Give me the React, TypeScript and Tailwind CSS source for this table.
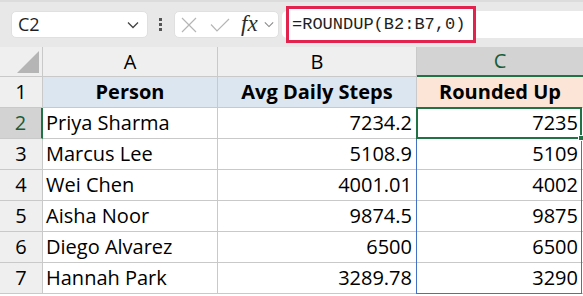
import React from "react"

const rows = [
  ["Priya Sharma", "7234.2", "7235"],
  ["Marcus Lee", "5108.9", "5109"],
  ["Wei Chen", "4001.01", "4002"],
  ["Aisha Noor", "9874.5", "9875"],
  ["Diego Alvarez", "6500", "6500"],
  ["Hannah Park", "3289.78", "3290"],
]

const line = "border-[#c9c9c9]"

function Chevron({ className }: { className?: string }) {
  return (
    <svg viewBox="0 0 12 8" className={className} fill="none" stroke="currentColor" strokeWidth="1.3">
      <path d="M1 1.5 L6 6.5 L11 1.5" />
    </svg>
  )
}

function Toolbar() {
  return (
    <div className="h-[47px] bg-[#e8e8e8] border-t-[2px] border-[#dcdcdc] flex items-center">
      {/* name box */}
      <div className="ml-[11px] w-[137px] h-[27px] rounded-[5px] bg-white border border-[#e0e0e0] flex items-center justify-between pl-[6px] pr-[8px]">
        <span className="text-[18px] text-[#1f1f1f]">C2</span>
        <Chevron className="w-[12px] h-[8px] text-[#444]" />
      </div>

      {/* vertical dots */}
      <div className="ml-[11px] w-[4px] flex flex-col gap-[2px]">
        <div className="w-[3px] h-[3px] bg-[#555]" />
        <div className="w-[3px] h-[3px] bg-[#555]" />
        <div className="w-[3px] h-[3px] bg-[#555]" />
      </div>

      {/* cancel / enter / fx */}
      <div className="ml-[11px] w-[105px] h-[27px] rounded-[5px] bg-white border border-[#e0e0e0] flex items-center pl-[6px]">
        <svg viewBox="0 0 16 16" className="w-[16px] h-[16px] text-[#b5b5b5]" fill="none" stroke="currentColor" strokeWidth="1.2">
          <path d="M1 1 L15 15 M15 1 L1 15" />
        </svg>
        <svg viewBox="0 0 20 14" className="ml-[13px] w-[20px] h-[14px] text-[#b5b5b5]" fill="none" stroke="currentColor" strokeWidth="1.2">
          <path d="M1 6.5 L7 13 L19 1" />
        </svg>
        <span className="ml-[11px] text-[23px] italic text-[#2b2b2b] leading-none -mt-[3px]" style={{ fontFamily: '"Liberation Serif", serif' }}>
          fx
        </span>
        <Chevron className="ml-[6px] w-[10px] h-[7px] text-[#888]" />
      </div>

      {/* formula input */}
      <div className="ml-[3px] flex-1 h-[27px] bg-white rounded-l-[5px] flex items-center pl-[4px]">
        <div className="h-[37px] w-[190px] border-[3px] border-[#e1234e] bg-white flex items-center pl-[3px] text-[17px] text-[#1f1f1f]" style={{ fontFamily: '"Liberation Mono", monospace' }}>
          =ROUNDUP(B2:B7,0)
        </div>
      </div>
    </div>
  )
}

export default function App() {
  return (
    <div className="w-[583px] h-[296px] overflow-hidden bg-white relative" style={{ fontFamily: '"Open Sans", sans-serif' }}>
      <Toolbar />

      <div className="grid grid-cols-[43px_175px_199px_166px] grid-rows-[30px_repeat(6,31px)_31px] text-[20px] text-black">
        {/* column headers */}
        <div className={`bg-[#efefef] border-r border-b ${line} relative`}>
          <div className="absolute right-[3px] bottom-[3px] w-0 h-0 border-l-[22px] border-l-transparent border-b-[22px] border-b-[#b5b5b5]" />
        </div>
        <div className={`bg-[#efefef] border-r border-b ${line} flex items-center justify-center`}>A</div>
        <div className={`bg-[#efefef] border-r border-b ${line} flex items-center justify-center`}>B</div>
        <div className="bg-[#d3d3d3] border-b-[2px] border-[#217346] flex items-center justify-center text-[#185c37]">C</div>

        {/* row 1 */}
        <div className={`bg-[#efefef] border-r border-b ${line} flex items-center justify-center`}>1</div>
        <div className={`bg-[#dce6f1] border-r border-b ${line} flex items-center justify-center font-bold`}>Person</div>
        <div className={`bg-[#dce6f1] border-r border-b ${line} flex items-center justify-center font-bold`}>Avg Daily Steps</div>
        <div className={`bg-[#fce4d6] border-b ${line} flex items-center justify-center font-bold`}>Rounded Up</div>

        {rows.map((r, i) => (
          <React.Fragment key={r[0]}>
            {i === 0 ? (
              <div className="bg-[#d3d3d3] border-r-[2px] border-b border-r-[#217346] border-b-[#c9c9c9] flex items-center justify-center text-[#185c37]">
                {i + 2}
              </div>
            ) : (
              <div className={`bg-[#efefef] border-r border-b ${line} flex items-center justify-center`}>{i + 2}</div>
            )}
            <div className={`border-r border-b ${line} flex items-center pl-[3px]`}>{r[0]}</div>
            <div className={`border-r border-b ${line} flex items-center justify-end pr-[4px]`}>{r[1]}</div>
            <div className={`border-b ${line} flex items-center justify-end pr-[5px]`}>{r[2]}</div>
          </React.Fragment>
        ))}

        <div className={`bg-[#efefef] border-r ${line}`} />
        <div className={`border-r ${line}`} />
        <div className={`border-r ${line}`} />
        <div />
      </div>

      {/* spill range C2:C7 */}
      <div className="absolute left-[416px] top-[107px] w-[166px] h-[187px] border border-[#4472c4] pointer-events-none" />
      {/* active cell C2 */}
      <div className="absolute left-[416px] top-[107px] w-[166px] h-[32px] border-[2px] border-[#217346] pointer-events-none" />
      {/* fill handle */}
      <div className="absolute left-[578px] top-[135px] w-[6px] h-[6px] bg-[#217346] border border-white" />
    </div>
  )
}
